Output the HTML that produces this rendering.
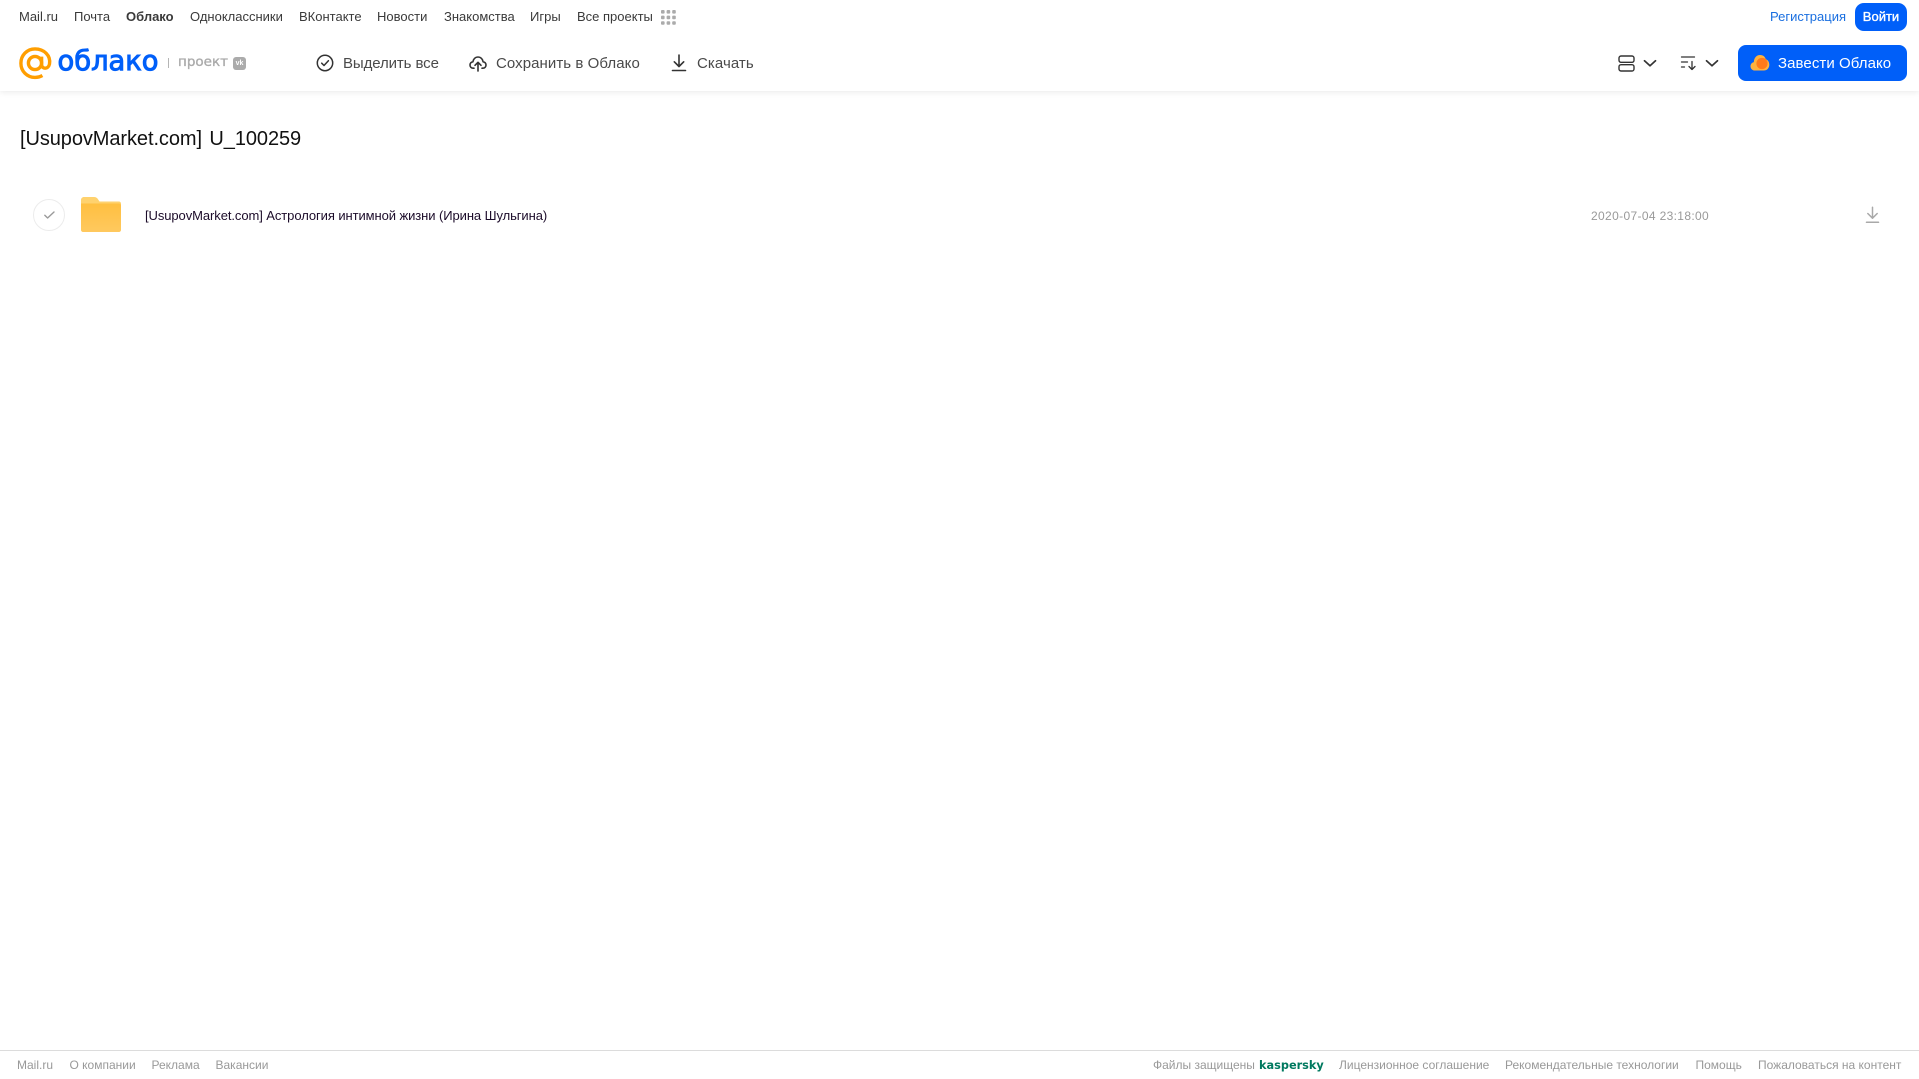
<!DOCTYPE html>
<html lang="ru">
<head>
<meta charset="utf-8">
<title>Облако</title>
<style>
html,body{margin:0;padding:0;width:1919px;height:1079px;overflow:hidden;background:#fff;font-family:"Liberation Sans","Noto Sans CJK SC",sans-serif;}
.t{position:absolute;white-space:nowrap;}
.n{top:9px;font-size:13px;line-height:15px;color:#3a3a3a;}
.b{top:54px;font-size:15px;line-height:20px;color:#4a4a4a;letter-spacing:.07px;}
.f{top:1058px;font-size:12px;line-height:14px;color:#999;}
svg{position:absolute;overflow:visible;}
#hdr{position:absolute;left:0;top:0;width:1919px;height:91px;background:#fff;box-shadow:0 1px 6px rgba(0,0,0,.09);}
</style>
</head>
<body>
<div id="hdr"></div>

<span class="t n" style="left:19px">Mail.ru</span>
<span class="t n" style="left:74px">Почта</span>
<span class="t n" style="left:126px;font-weight:bold">Облако</span>
<span class="t n" style="left:190px">Одноклассники</span>
<span class="t n" style="left:299px">ВКонтакте</span>
<span class="t n" style="left:377px">Новости</span>
<span class="t n" style="left:444px">Знакомства</span>
<span class="t n" style="left:530px">Игры</span>
<span class="t n" style="left:577px">Все проекты</span>
<svg style="left:661px;top:10px" width="15" height="15" fill="#ababab">
<rect x="0" y="0" width="3.6" height="3.6" rx="1"/><rect x="5.6" y="0" width="3.6" height="3.6" rx="1"/><rect x="11.2" y="0" width="3.6" height="3.6" rx="1"/>
<rect x="0" y="5.6" width="3.6" height="3.6" rx="1"/><rect x="5.6" y="5.6" width="3.6" height="3.6" rx="1"/><rect x="11.2" y="5.6" width="3.6" height="3.6" rx="1"/>
<rect x="0" y="11.2" width="3.6" height="3.6" rx="1"/><rect x="5.6" y="11.2" width="3.6" height="3.6" rx="1"/><rect x="11.2" y="11.2" width="3.6" height="3.6" rx="1"/>
</svg>

<span class="t n" style="left:1770px;color:#1a6fe0">Регистрация</span>
<div class="t" style="left:1855px;top:3px;width:52px;height:28px;border-radius:9px;background:#005ff9;color:#fff;font-size:13px;-webkit-text-stroke:.35px #fff;line-height:27px;text-align:center">Войти</div>

<!-- logo -->
<svg style="left:19px;top:47px" width="33" height="33" viewBox="0 0 33 33" fill="none" stroke="#ff9e00" stroke-width="3.4">
<circle cx="16" cy="16" r="6.6"/>
<path d="M22.6 9.6V17.5c0 5 6.9 5 7.9-.5C32 8.5 25 1.9 16 1.9 8 1.9 1.9 8.3 1.9 16.2 1.9 24.2 8 30.4 16 30.4c3 0 5.2-.6 7.400-1.900"/>
</svg>
<svg style="left:56px;top:40px" width="108" height="40">
<text x="1.500" y="30" font-family="DejaVu Sans, sans-serif" font-size="28" fill="#005ff9" stroke="#005ff9" stroke-width="1" textLength="101" lengthAdjust="spacingAndGlyphs">облако</text>
</svg>
<div class="t" style="left:168px;top:58px;width:1px;height:10px;background:#b5b5b5"></div>
<span class="t" style="left:178px;top:53px;font-family:'DejaVu Sans',sans-serif;font-size:13.5px;-webkit-text-stroke:.35px #ababab;line-height:19px;color:#ababab">проект</span>
<div class="t" style="left:233px;top:57px;width:13px;height:13px;border-radius:3px;background:#ababab;color:#fff;font-size:7px;font-weight:bold;line-height:13px;text-align:center">vk</div>

<!-- toolbar -->
<svg style="left:316px;top:54px" width="18" height="18" viewBox="0 0 18 18" fill="none" stroke="#333" stroke-width="1.5">
<circle cx="9" cy="9" r="7.7"/><path d="M5.7 9.2l2.3 2.3 4.4-4.8" stroke-linecap="round" stroke-linejoin="round"/>
</svg>
<span class="t b" style="left:343px;letter-spacing:-.1px">Выделить все</span>
<svg style="left:469px;top:54px" width="18" height="18" viewBox="0 0 18 18" fill="none" stroke="#333" stroke-width="1.6" stroke-linecap="round" stroke-linejoin="round">
<path d="M5 14.200H4.200C2.300 14.200 1 12.800 1 11c0-1.700 1.200-3 2.900-3.200C4.300 4.900 6.400 3 9 3s4.700 1.900 5.100 4.800c1.700.2 2.900 1.500 2.900 3.200 0 1.800-1.300 3.200-3.200 3.200H13"/>
<path d="M9 17V8.500M6 11.300l3-3 3 3"/>
</svg>
<span class="t b" style="left:496px">Сохранить в Облако</span>
<svg style="left:671px;top:54px" width="16" height="18" viewBox="0 0 16 18" fill="none" stroke="#333" stroke-width="1.6" stroke-linecap="round" stroke-linejoin="round">
<path d="M8 1v11M3.300 7.800L8 12.500l4.700-4.700"/><path d="M1.500 16.500h13"/>
</svg>
<span class="t b" style="left:697px">Скачать</span>

<svg style="left:1618px;top:55px" width="17" height="17" viewBox="0 0 17 17" fill="none" stroke="#333" stroke-width="1.4">
<rect x="1" y="1" width="15" height="6.300" rx="2"/><rect x="1" y="9.700" width="15" height="6.300" rx="2"/>
</svg>
<svg style="left:1643px;top:59px" width="14" height="9" viewBox="0 0 14 9" fill="none" stroke="#333" stroke-width="1.700" stroke-linecap="round" stroke-linejoin="round"><path d="M1.500 1.800L7 6.800l5.500-5"/></svg>
<svg style="left:1680px;top:55px" width="18" height="16" viewBox="0 0 18 16" fill="none" stroke="#333" stroke-width="1.300" stroke-linecap="round" stroke-linejoin="round">
<path d="M1.500 2h13M1.500 7h6M1.500 12h3"/><path d="M12 6.500v8M9 11.500l3 3 3-3"/>
</svg>
<svg style="left:1705px;top:59px" width="14" height="9" viewBox="0 0 14 9" fill="none" stroke="#333" stroke-width="1.700" stroke-linecap="round" stroke-linejoin="round"><path d="M1.500 1.800L7 6.800l5.500-5"/></svg>

<div class="t" style="left:1738px;top:45px;width:169px;height:36px;border-radius:8px;background:#005ff9"></div>
<svg style="left:1750px;top:54px" width="20" height="17" viewBox="0 0 20 17">
<path d="M5 16.500C2.200 16.500 .5 14.500.5 12.200.5 10 2 8.500 3.800 8.100 4 4 6.500 1 10 1c3.500 0 5 2 5.800 4.200 2 .6 3.500 2.700 3.500 5.500 0 3.300-2.300 5.800-5.500 5.800z" fill="#ffb23e"/>
<circle cx="12" cy="9.500" r="5.600" fill="#ff7a1a"/>
</svg>
<span class="t b" style="left:1778px;color:#fff">Завести Облако</span>

<!-- content -->
<div class="t" style="left:20px;top:127px;font-size:20px;line-height:24px;letter-spacing:-.08px;word-spacing:2px;color:#111">[UsupovMarket.com] U_100259</div>

<div class="t" style="left:33px;top:199px;width:30px;height:30px;border:1px solid #ececec;border-radius:50%"></div>
<svg style="left:44px;top:211px" width="11" height="8" viewBox="0 0 11 8" fill="none" stroke="#9a9a9a" stroke-width="1.400" stroke-linecap="round" stroke-linejoin="round"><path d="M.8 4.300l2.800 2.700L10 1"/></svg>
<svg style="left:81px;top:197px" width="40" height="36" viewBox="0 0 40 36">
<defs><linearGradient id="fg" x1="0" y1="0" x2="0" y2="1"><stop offset="0" stop-color="#ffbf40"/><stop offset="1" stop-color="#ffc95f"/></linearGradient></defs>
<path d="M0 3C0 1.300 1.300 0 3 0h10c2 0 3 .8 4 2.200L18.500 4.500H38c1.100 0 2 .9 2 2V10H0z" fill="#ffd26e"/>
<path d="M0 6.500h38c1.100 0 2 .9 2 2V33c0 1.100-.9 2-2 2H2c-1.100 0-2-.9-2-2z" fill="url(#fg)"/>
</svg>
<span class="t" style="left:145px;top:208px;font-size:13px;line-height:16px;letter-spacing:-.08px;color:#1c0c2a">[UsupovMarket.com] Астрология интимной жизни (Ирина Шульгина)</span>
<span class="t" style="left:1591px;top:209px;font-size:12px;line-height:14px;letter-spacing:.35px;color:#999">2020-07-04 23:18:00</span>
<svg style="left:1865px;top:206px" width="15" height="18" viewBox="0 0 15 18" fill="none" stroke="#a9a9a9" stroke-width="1.500" stroke-linecap="round" stroke-linejoin="round"><path d="M7.500 1.200v10.800M2.800 7.500l4.700 4.700 4.700-4.700"/><path d="M1.500 16.300h12"/></svg>

<!-- footer -->
<div class="t" style="left:0;top:1050px;width:1919px;height:1px;background:#dcdcdc"></div>
<span class="t f" style="left:17px">Mail.ru</span>
<span class="t f" style="left:69.500px">О компании</span>
<span class="t f" style="left:151.500px">Реклама</span>
<span class="t f" style="left:215.500px">Вакансии</span>
<span class="t f" style="left:1153px">Файлы защищены</span>
<span class="t f" style="left:1259px;top:1059px;color:#00795f;font-weight:bold;font-family:'DejaVu Sans',sans-serif;font-size:11.300px">kaspersky</span>
<span class="t f" style="left:1339px">Лицензионное соглашение</span>
<span class="t f" style="left:1505px">Рекомендательные технологии</span>
<span class="t f" style="left:1695.500px">Помощь</span>
<span class="t f" style="left:1758px">Пожаловаться на контент</span>
</body>
</html>
